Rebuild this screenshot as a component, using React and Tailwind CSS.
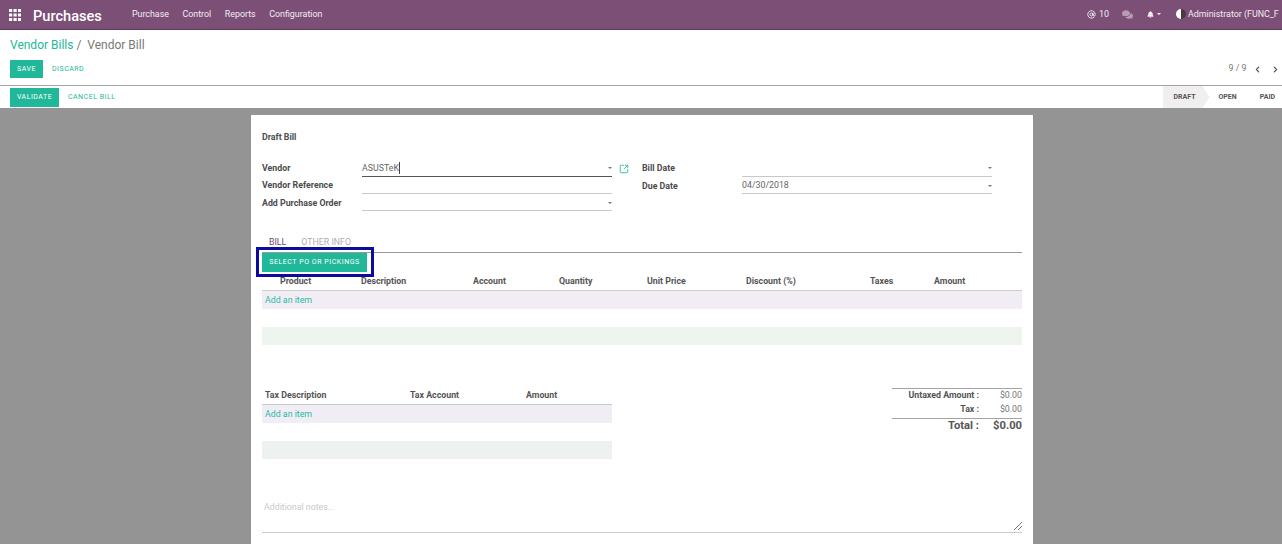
import React from "react";
import { FaBell, FaComments, FaChevronLeft, FaChevronRight } from "react-icons/fa";
import { AtSign, SquareArrowOutUpRight } from "lucide-react";

function Caret() {
  return <span className="w-0 h-0 border-x-[2.5px] border-x-transparent border-t-[2.5px] border-t-[#777]" />;
}

function Grid() {
  return (
    <svg width="12" height="12" viewBox="0 0 12 12" fill="#fff">
      {[0, 4.5, 9].map((y) => [0, 4.5, 9].map((x) => <rect key={x + "-" + y} x={x} y={y} width="3.2" height="3" />))}
    </svg>
  );
}

function Field({ label, value, caret, active, cursor }) {
  return (
    <div className="flex items-start h-[17.5px]">
      <span className="w-[100px] font-bold text-[#4c4c4c] text-[8.8px] leading-[14px]">{label}</span>
      <div className={"w-[250px] flex items-center justify-between h-[15.5px] border-b text-[8.8px] text-[#666] " + (active ? "border-[#555]" : "border-[#c8c8c8]")}>
        <span className="flex items-center">
          {value}
          {cursor && <span className="inline-block w-px h-[12px] bg-[#444]" />}
        </span>
        {caret && <span className="flex"><Caret /></span>}
      </div>
    </div>
  );
}

function Cols({ items, className }) {
  return (
    <div className={"grid h-[18px] items-center font-bold text-[8.8px] text-[#555] " + className}>
      {items.map((t, i) => <span key={i}>{t}</span>)}
    </div>
  );
}

export default function App() {
  return (
    <div className="h-[544px] w-[1282px] overflow-hidden flex flex-col bg-white font-['Roboto',sans-serif] text-[#555]">
      <header className="h-[30px] shrink-0 bg-[#7c4f77] border-b border-[#5d3a58] flex items-center text-white">
        <span className="ml-[9px] flex"><Grid /></span>
        <span className="ml-[12px] mt-[3px] text-[14.6px] font-medium leading-none">Purchases</span>
        <nav className="ml-[30px] flex gap-[13.5px] text-[8.9px] text-[#f2ecf1]">
          <span>Purchase</span><span>Control</span><span>Reports</span><span>Configuration</span>
        </nav>
        <div className="ml-auto mr-[3px] flex items-center text-[8.9px] text-[#f2ecf1] whitespace-nowrap w-[192px] overflow-hidden">
          <AtSign size={9} strokeWidth={2.5} className="shrink-0" />
          <span className="ml-[3px]">10</span>
          <FaComments size={11} className="ml-[13px] shrink-0 text-[#b79db3]" />
          <FaBell size={7} className="ml-[14px] shrink-0" />
          <span className="ml-[3px] shrink-0 w-[4px] h-0 border-x-[2px] border-x-transparent border-t-[2px] border-t-white" />
          <span className="ml-[15px] shrink-0 w-[10px] h-[10px] rounded-full bg-[linear-gradient(90deg,#fff_50%,#4a3a40_50%)]" />
          <span className="ml-[2px]">Administrator (FUNC_FOLDER)</span>
        </div>
      </header>

      <div className="h-[55px] shrink-0 pl-[10px] pr-[3px]">
        <div className="pt-[8px] text-[12px] leading-[15px] whitespace-nowrap">
          <span className="text-[#21b799]">Vendor Bills</span>
          <span className="text-[#777]"> /&nbsp; Vendor Bill</span>
        </div>
        <div className="mt-[7px] flex items-center h-[18px] text-[7px] tracking-[0.5px]">
          <span className="w-[33px] h-[18px] bg-[#21b799] text-white flex items-center justify-center">SAVE</span>
          <span className="ml-[9px] text-[#21b799]">DISCARD</span>
          <span className="ml-auto flex items-center text-[8.8px] text-[#777] tracking-normal">
            9 / 9
            <FaChevronLeft size={7} className="ml-[7.5px] text-[#555]" />
            <FaChevronRight size={7} className="ml-[11px] text-[#555]" />
          </span>
        </div>
      </div>

      <div className="h-[23px] shrink-0 border-t border-[#a3a3a3] flex items-stretch pl-[10px] text-[7px] tracking-[0.5px]">
        <span className="w-[49px] mt-[2px] mb-px bg-[#21b799] text-white flex items-center justify-center">VALIDATE</span>
        <span className="ml-[9px] text-[#21b799] flex items-center">CANCEL BILL</span>
        <div className="ml-auto flex text-[#555] font-bold tracking-normal">
          <span className="w-[47px] [clip-path:polygon(0_0,85%_0,100%_50%,85%_100%,0_100%)] bg-[#f1eef0] flex items-center pl-[11px]">DRAFT</span>
          <span className="ml-[9px] flex items-center">OPEN</span>
          <span className="ml-[23px] mr-[7px] flex items-center">PAID</span>
        </div>
      </div>

      <main className="flex-1 min-h-0 bg-[#959494] pt-[7px] pl-[251px]">
        <div className="w-[782px] h-[500px] bg-white px-[11px] pt-[15px]">
          <div className="font-bold text-[8.8px] leading-[14px] text-[#4c4c4c]">Draft Bill</div>
          <div className="mt-[17px] flex h-[52px]">
            <div className="flex flex-col">
              <Field label="Vendor" value="ASUSTeK" caret active cursor />
              <Field label="Vendor Reference" value="" />
              <Field label="Add Purchase Order" value="" caret />
            </div>
            <span className="ml-[7px] mt-[3px] text-[#21b799]"><SquareArrowOutUpRight size={10} /></span>
            <div className="ml-[13px] flex flex-col">
              <Field label="Bill Date" value="" caret />
              <Field label="Due Date" value="04/30/2018" caret />
            </div>
          </div>

          <div className="mt-[21.5px] h-[18px] border-b border-[#999] flex items-start pl-[7px] gap-[15px] text-[8.8px] leading-[14px] whitespace-nowrap">
            <span className="text-[#6d4a6b]">BILL</span>
            <span className="text-[#b3a9b3]">OTHER INFO</span>
          </div>

          <div className="relative mt-[0.5px] h-[19px] w-[105px]">
            <div className="h-full bg-[#21b799] text-white text-[7px] tracking-[0.55px] flex items-center justify-center whitespace-nowrap">SELECT PO OR PICKINGS</div>
            <div className="absolute -left-[6px] -top-[6px] -right-[7px] -bottom-[5px] border-[3px] border-[#0b0b9e]" />
          </div>

          <Cols
            className="mt-px border-b border-[#ccc] grid-cols-[18px_81px_112px_86px_88px_99px_124px_64px_1fr]"
            items={["", "Product", "Description", "Account", "Quantity", "Unit Price", "Discount (%)", "Taxes", "Amount"]}
          />
          <div className="h-[18px] bg-[#f2edf4] text-[#1fb9a6] text-[8.8px] leading-[18px] pl-[3px]">Add an item</div>
          <div className="h-[18px]" />
          <div className="h-[18px] bg-[#edf5ee]" />

          <div className="mt-[39px] flex">
            <div className="w-[350px] pt-[3px]">
              <Cols
                className="border-b border-[#c5cccc] grid-cols-[3px_145px_116px_1fr]"
                items={["", "Tax Description", "Tax Account", "Amount"]}
              />
              <div className="h-[18px] bg-[#f0edf4] text-[#1fb9a6] text-[8.8px] leading-[18px] pl-[3px]">Add an item</div>
              <div className="h-[18px]" />
              <div className="h-[18px] bg-[#edf2f0]" />
            </div>
            <div className="ml-[280px] w-[130px] mt-[3.5px]">
              <div className="border-t border-[#a3a3a3] h-[15px] flex items-center text-[8.8px]">
                <b className="w-[87px] text-right text-[#555]">Untaxed Amount :</b>
                <span className="ml-auto text-[#777]">$0.00</span>
              </div>
              <div className="h-[15px] flex items-center text-[8.8px]">
                <b className="w-[87px] text-right text-[#555]">Tax :</b>
                <span className="ml-auto text-[#777]">$0.00</span>
              </div>
              <div className="border-t border-[#a3a3a3] h-[17px] flex items-center text-[11.2px] font-bold text-[#555]">
                <span className="w-[87px] text-right">Total :</span>
                <span className="ml-auto">$0.00</span>
              </div>
            </div>
          </div>

          <div className="mt-[39px] h-[35px] border-b border-[#ccc] text-[8.8px] text-[#c9c9c9] pl-[2px] relative leading-[14px] pt-[2px]">
            Additional notes...
            <svg className="absolute right-0 bottom-[2px]" width="8" height="8" viewBox="0 0 8 8" stroke="#555" strokeWidth="0.8">
              <path d="M0 8 L8 0 M4 8 L8 4" />
            </svg>
          </div>
        </div>
      </main>
    </div>
  );
}
